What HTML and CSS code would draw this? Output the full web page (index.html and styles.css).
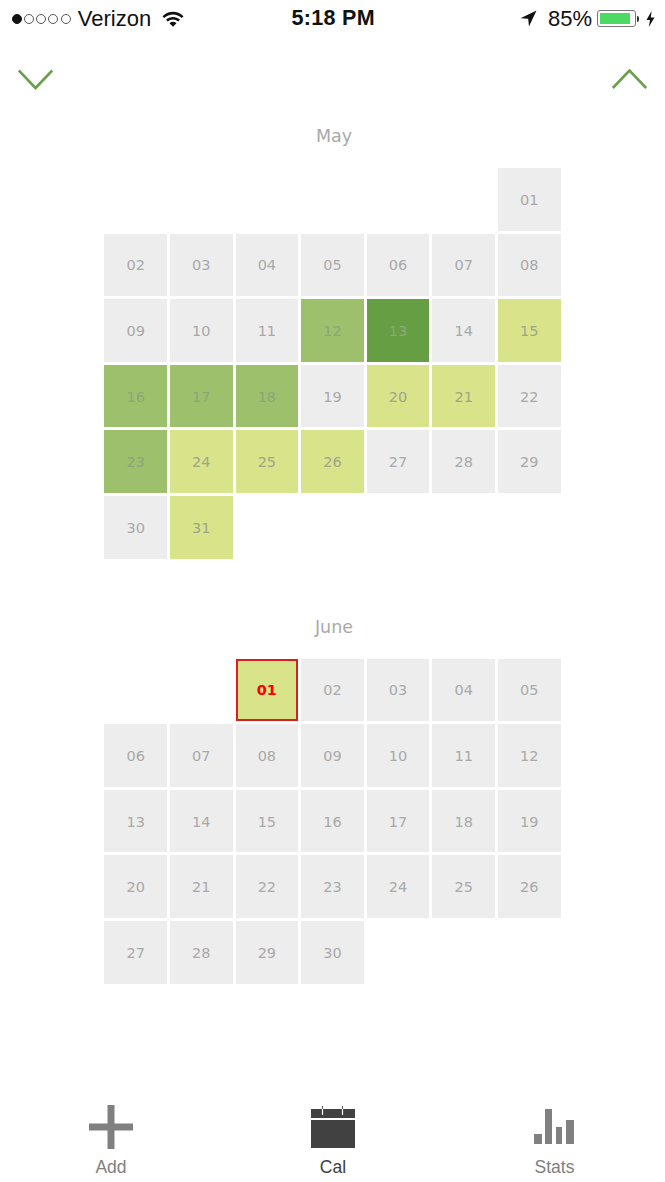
FILE: index.html
```html
<!DOCTYPE html>
<html>

	<head>
		<meta charset="utf-8">
		<title>Cal</title>
		<link rel="stylesheet" href="styles.css">
	</head>

	<body>
		<div class="status">
			<div class="status_left">
				<span class="dots"><i class="on"></i><i></i><i></i><i></i><i></i></span>
				<span class="carrier">Verizon</span>
				<svg class="wifi" width="22" height="16" viewBox="0 0 22 16">
					<path d="M0.5 5.2C6.5 -0.6 15.5 -0.6 21.5 5.2L19.8 7C14.8 2.3 7.2 2.3 2.2 7Z" fill="#111"/>
					<path d="M4 8.8C8 5 14 5 18 8.8L16.2 10.6C13.2 7.9 8.8 7.9 5.8 10.6Z" fill="#111"/>
					<path d="M7.5 12.2C9.6 10.4 12.4 10.4 14.5 12.2L11 15.8Z" fill="#111"/>
				</svg>
			</div>
			<div class="time">5:18 PM</div>
			<div class="status_right">
				<svg class="arrow" width="17" height="17" viewBox="0 0 17 17">
					<path d="M16.5 0.5L0.5 8.2L8.2 8.8L9 16.5Z" fill="#111"/>
				</svg>
				<span class="percent">85%</span>
				<span class="battery"><span class="battery_fill"></span></span>
				<span class="battery_tip"></span>
				<svg class="bolt" width="9" height="16" viewBox="0 0 9 16">
					<path d="M5.6 0L0.5 9H4L2.8 16L8.5 6.4H4.8Z" fill="#111"/>
				</svg>
			</div>
		</div>

		<div class="nav">
			<svg width="36" height="22" viewBox="0 0 36 22">
				<path d="M0.8 1.5L17.5 19L34.2 1.5" class="chevron"/>
			</svg>
			<svg width="36" height="22" viewBox="0 0 36 22">
				<path d="M1.8 19L18.5 1.5L35.2 19" class="chevron"/>
			</svg>
		</div>

		<div class="month month_may">
			<h2>May</h2>
			<div class="grid">
				<div class="cell start7">01</div>
				<div class="cell">02</div>
				<div class="cell">03</div>
				<div class="cell">04</div>
				<div class="cell">05</div>
				<div class="cell">06</div>
				<div class="cell">07</div>
				<div class="cell">08</div>
				<div class="cell">09</div>
				<div class="cell">10</div>
				<div class="cell">11</div>
				<div class="cell mid">12</div>
				<div class="cell dark">13</div>
				<div class="cell">14</div>
				<div class="cell light">15</div>
				<div class="cell mid">16</div>
				<div class="cell mid">17</div>
				<div class="cell mid">18</div>
				<div class="cell">19</div>
				<div class="cell light">20</div>
				<div class="cell light">21</div>
				<div class="cell">22</div>
				<div class="cell mid">23</div>
				<div class="cell light">24</div>
				<div class="cell light">25</div>
				<div class="cell light">26</div>
				<div class="cell">27</div>
				<div class="cell">28</div>
				<div class="cell">29</div>
				<div class="cell">30</div>
				<div class="cell light">31</div>
			</div>
		</div>

		<div class="month month_june">
			<h2>June</h2>
			<div class="grid">
				<div class="cell light today start3">01</div>
				<div class="cell">02</div>
				<div class="cell">03</div>
				<div class="cell">04</div>
				<div class="cell">05</div>
				<div class="cell">06</div>
				<div class="cell">07</div>
				<div class="cell">08</div>
				<div class="cell">09</div>
				<div class="cell">10</div>
				<div class="cell">11</div>
				<div class="cell">12</div>
				<div class="cell">13</div>
				<div class="cell">14</div>
				<div class="cell">15</div>
				<div class="cell">16</div>
				<div class="cell">17</div>
				<div class="cell">18</div>
				<div class="cell">19</div>
				<div class="cell">20</div>
				<div class="cell">21</div>
				<div class="cell">22</div>
				<div class="cell">23</div>
				<div class="cell">24</div>
				<div class="cell">25</div>
				<div class="cell">26</div>
				<div class="cell">27</div>
				<div class="cell">28</div>
				<div class="cell">29</div>
				<div class="cell">30</div>
			</div>
		</div>

		<div class="tabs">
			<div class="tab">
				<svg width="44" height="44" viewBox="0 0 44 44">
					<path d="M18.5 0H25.5V18.5H44V25.5H25.5V44H18.5V25.5H0V18.5H18.5Z" fill="#808080"/>
				</svg>
				<span>Add</span>
			</div>
			<div class="tab tab_on">
				<svg width="44" height="44" viewBox="0 0 44 44">
					<path d="M0 4H44V13H0Z" fill="#414141"/>
					<path d="M0 15H44V43H0Z" fill="#414141"/>
					<path d="M11.5 4V10M31.5 4V10" stroke="#fff" stroke-width="1.2"/>
					<path d="M11.5 1V4M31.5 1V4" stroke="#666" stroke-width="1.2"/>
				</svg>
				<span>Cal</span>
			</div>
			<div class="tab">
				<svg width="44" height="44" viewBox="0 0 44 44">
					<path d="M1 29H9V39H1ZM12 4H19V39H12ZM23 22H29V39H23ZM33 15H41V39H33Z" fill="#808080"/>
				</svg>
				<span>Stats</span>
			</div>
		</div>
	</body>

</html>
```

FILE: styles.css
```css
* {
	margin: 0;
	padding: 0;
	box-sizing: border-box;
}

body {
	width: 665px;
	height: 1182px;
	background: #fff;
	font-family: "DejaVu Sans", sans-serif;
	overflow: hidden;
}

.status {
	height: 37px;
	display: grid;
	grid-template-columns: 1fr auto 1fr;
	align-items: center;
	padding: 0 10px 0 11.6px;
	font-family: "Liberation Sans", sans-serif;
	font-size: 22px;
	color: #111;
}

.status_left,
.status_right {
	display: flex;
	align-items: center;
}

.status_right {
	justify-content: flex-end;
}

.dots {
	display: flex;
	gap: 2.3px;
}

.dots i {
	display: block;
	width: 10px;
	height: 10px;
	border: 1px solid #555;
	border-radius: 50%;
}

.dots .on {
	background: #111;
	border-color: #111;
}

.carrier {
	margin-left: 7px;
}

.wifi {
	margin-left: 11px;
}

.time {
	font-weight: 700;
	font-size: 21.5px;
	letter-spacing: 0.3px;
}

.percent {
	margin-left: 10px;
}

.arrow {
	display: block;
	margin-right: 1px;
}

.battery {
	display: block;
	width: 39px;
	height: 17px;
	margin-left: 5px;
	padding: 2px;
	border: 1px solid #777;
	border-radius: 3px;
}

.battery_fill {
	display: block;
	width: 30px;
	height: 100%;
	background: #4cd964;
}

.battery_tip {
	display: block;
	width: 2px;
	height: 6px;
	margin-left: 1px;
	background: #333;
	border-radius: 0 2px 2px 0;
}

.bolt {
	margin-left: 7px;
}

.nav {
	height: 22px;
	margin-top: 32px;
	padding: 0 18px;
	display: flex;
	justify-content: space-between;
}

.chevron {
	fill: none;
	stroke: #6a9f4b;
	stroke-width: 2.6;
}

.month h2 {
	height: 30px;
	margin-bottom: 17px;
	padding-left: 3px;
	font-size: 17.5px;
	font-weight: 400;
	line-height: 30px;
	text-align: center;
	color: #a9a9a9;
}

.month_may {
	margin-top: 30px;
}

.month_june {
	margin-top: 53px;
}

.grid {
	width: 457px;
	margin-left: 104.4px;
	display: grid;
	grid-template-columns: repeat(7, 62.6px);
	grid-auto-rows: 62.6px;
	gap: 3px;
}

.cell {
	display: flex;
	align-items: center;
	justify-content: center;
	padding-top: 1px;
	background: #ededed;
	font-size: 14.5px;
	color: #a9a9a9;
}

.start7 {
	grid-column-start: 7;
}

.start3 {
	grid-column-start: 3;
}

.light {
	background: #d9e38a;
	color: #a0a58a;
}

.mid {
	background: #9cc06c;
	color: #8fa57a;
}

.dark {
	background: #669e43;
	color: #8fa67c;
}

.today {
	border: 2px solid #d8211c;
	color: #f00;
	font-weight: 700;
}

.tabs {
	margin-top: 121px;
	display: grid;
	grid-template-columns: 222px 222px 221px;
}

.tab {
	display: flex;
	flex-direction: column;
	align-items: center;
	gap: 8px;
	font-family: "Liberation Sans", sans-serif;
	font-size: 17.5px;
	color: #808080;
}

.tab_on {
	color: #414141;
}
```
